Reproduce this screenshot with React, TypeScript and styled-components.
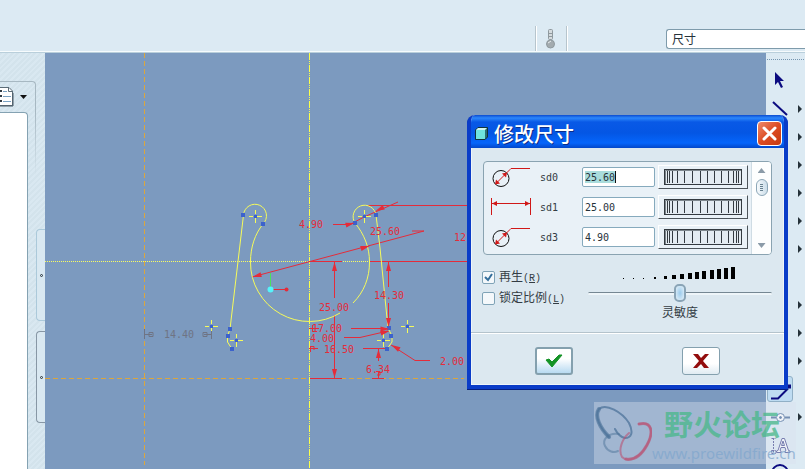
import React from "react";
import styled, { createGlobalStyle, css } from "styled-components";

const GlobalStyle = createGlobalStyle`
  *, *::before, *::after { box-sizing: border-box; }
  body {
    margin: 0;
    overflow: hidden;
    font-family: "DejaVu Sans Mono", "Noto Sans CJK SC", monospace;
    font-size: 12px;
    color: #333c44;
    background: #dceaf3;
  }
`;

const cjk = css`font-family: "Noto Sans CJK SC", sans-serif;`;

const Page = styled.div`
  display: flex;
  flex-direction: column;
  height: 100vh;
`;

const TopBar = styled.header`
  display: flex;
  flex: none;
  align-items: flex-end;
  justify-content: flex-end;
  gap: 99px;
  height: 53px;
  padding-top: 26px;
  background: #dceaf3;
  border-bottom: 1px solid #b9cfdb;
  box-shadow: inset 0 -1px #f6fbfd;
`;

const ToolGroup = styled.div`
  display: flex;
  align-items: center;
  justify-content: center;
  width: 32px;
  height: 25px;
  margin-bottom: 1px;
  border: solid #b7c5cd;
  border-width: 0 1px;
  box-shadow: inset 1px 0 #fff, 1px 0 #fff;
`;

const FilterSelect = styled.select`
  ${cjk}
  appearance: none;
  width: 139px;
  height: 20px;
  margin-bottom: 3px;
  padding: 0 5px;
  font-size: 12px;
  line-height: 16px;
  color: #26323a;
  background: #fff;
  border: 1px solid #7e9bab;
  border-right: 0;
  border-radius: 3px 0 0 3px;
`;

const Workspace = styled.div`
  display: flex;
  flex: 1;
  min-height: 0;
`;

const SidePanel = styled.aside`
  display: flex;
  flex: none;
  width: 45px;
  background: repeating-linear-gradient(135deg, #d3e3ec 0 2px, #d9e8f1 2px 4px);
`;

const TreePane = styled.section`
  display: flex;
  flex-direction: column;
  flex: 1;
  padding-top: 28px;
  background: linear-gradient(#a7b8c2, rgba(167, 184, 194, 0)) right 59px / 1px 64px no-repeat;
`;

const TreeHeader = styled.div`
  display: flex;
  flex: none;
  align-items: center;
  gap: 6px;
  height: 31px;
  border-top: 1px solid #a7b8c2;
  border-right: 1px solid #a7b8c2;
  border-top-right-radius: 4px;
`;

const TreeBody = styled.div`
  flex: 1;
  margin-right: 8px;
  background: #fff;
  border: solid #84a2b2;
  border-width: 1px 1px 0 0;
  border-top-right-radius: 4px;
`;

const PlainButton = styled.button`
  display: flex;
  align-items: center;
  padding: 0;
  background: none;
  border: 0;
`;

const SplitterColumn = styled.div`
  display: flex;
  flex-direction: column;
  gap: 10px;
  width: 9px;
  padding-top: 176px;
`;

const SplitterTab = styled.button<{ $strong?: boolean }>`
  display: flex;
  align-items: center;
  justify-content: center;
  height: 92px;
  padding: 0;
  background: #d9e8f1;
  border: 1px solid ${(p) => (p.$strong ? "#8797a5" : "#abc9da")};
  border-right: 0;
  border-radius: 4px 0 0 4px;

  &::before {
    width: 3px;
    height: 3px;
    content: "";
    border: 1px solid #26323a;
    border-radius: 50%;
  }
`;

const Canvas = styled.main`
  flex: 1;
  min-width: 0;
  background: #7c9abf;
`;

const Drawing = styled.svg`
  display: block;
  width: 100%;
  height: 100%;
  font-family: "DejaVu Sans Mono", monospace;
  font-size: 10px;
`;

const Toolbar = styled.nav`
  display: flex;
  flex-direction: column;
  flex: none;
  width: 39px;
  padding: 4px 0 0 1px;
  overflow: hidden;
  background: #dceaf3;
`;

const Grip = styled.div`
  flex: none;
  height: 3px;
  margin-bottom: 7px;
  background:
    repeating-linear-gradient(#dceaf3 0 1px, transparent 1px 2px) 0 1px,
    repeating-linear-gradient(90deg, #7595b0 0 1px, #dceaf3 1px 2px);
`;

const ToolRow = styled.div`
  display: flex;
  flex: none;
  align-items: center;
  justify-content: space-between;
  height: 28px;
  padding-right: 3px;
`;

const ToolButton = styled.button<{ $active?: boolean }>`
  display: flex;
  align-items: center;
  justify-content: center;
  width: 26px;
  height: 26px;
  padding: 0;
  background: ${(p) => (p.$active ? "#bedcf2" : "none")};
  border: 1px solid ${(p) => (p.$active ? "#91b0c6" : "transparent")};
  border-radius: 3px;
`;

const Flyout = styled.button`
  width: 4px;
  height: 8px;
  padding: 0;
  background: none;
  border: solid transparent;
  border-width: 4px 0 4px 4px;
  border-left-color: #26323a;
`;

const Dialog = styled.section`
  position: absolute;
  top: 115px;
  left: 467px;
  width: 321px;
  overflow: hidden;
  background: #dce8f0;
  border: solid #0a3cc8;
  border-width: 0 4px 4px;
  border-radius: 8px 8px 0 0;
  box-shadow: inset 0 0 0 1px #eef5f9, 0 1px #061f80;
`;

const TitleBar = styled.header`
  display: flex;
  align-items: center;
  gap: 6px;
  height: 33px;
  margin: 0 -4px;
  padding: 4px 6px 0 8px;
  background: linear-gradient(#0a4bd0 0, #2c87fb 3px, #0959e6 7px, #0456e4 18px, #0565fb 28px, #0347c9 33px);
`;

const Title = styled.h1`
  ${cjk}
  flex: 1;
  margin: 0;
  font-size: 20px;
  font-weight: 500;
  line-height: 28px;
  color: #fff;
  text-shadow: 1px 1px #0a2e8c;
`;

const CloseButton = styled.button`
  display: flex;
  align-items: center;
  justify-content: center;
  width: 25px;
  height: 25px;
  padding: 0;
  background: linear-gradient(135deg, #ee8b6c, #dc4c23 50%, #c53a12);
  border: 1px solid #fff;
  border-radius: 4px;
`;

const ListBox = styled.div`
  display: flex;
  height: 94px;
  margin: 13px 12px 0;
  overflow: hidden;
  background: #e9f1f7;
  border: 1px solid #8aa3b1;
  border-radius: 4px;
`;

const DimensionRows = styled.div`
  flex: 1;
`;

const DimensionRow = styled.div`
  display: flex;
  align-items: center;
  height: 30px;
  padding-left: 7px;
`;

const DimensionLabel = styled.label`
  width: 42px;
  margin-left: 8px;
  font-size: 10px;
`;

const DimensionInput = styled.input<{ $selected?: boolean }>`
  width: 73px;
  height: 20px;
  margin-right: 3px;
  padding: 0 2px;
  font-family: "DejaVu Sans Mono", monospace;
  font-size: 10px;
  color: #26323a;
  background: #fff;
  border: 1px solid #86aabd;
  border-radius: 2px;
  ${(p) =>
    p.$selected &&
    css`
      background-image: linear-gradient(90deg, #a9dcdc 30px, #111 30px, #111 31px, transparent 31px);
      background-repeat: no-repeat;
      background-position: 2px 3px;
      background-size: 31px 12px;
    `}
`;

const WheelButton = styled.button`
  display: flex;
  align-items: center;
  justify-content: center;
  width: 90px;
  height: 24px;
  padding: 0;
  background: #e9f1f7;
  border: solid;
  border-width: 1px 1px 1px 1px;
  border-color: #fff #4c545a #4c545a #fff;
`;

const ScrollBar = styled.div`
  display: flex;
  flex-direction: column;
  align-items: center;
  width: 20px;
  padding: 6px 0;
  background: #fdfefe;
  border-left: 1px solid #cfdce4;
`;

const ScrollArrow = styled.button<{ $down?: boolean }>`
  width: 8px;
  height: 5px;
  padding: 0;
  background: #8b9ba8;
  border: 0;
  clip-path: ${(p) => (p.$down ? "polygon(0 0, 100% 0, 50% 100%)" : "polygon(50% 0, 100% 100%, 0 100%)")};
`;

const ScrollThumb = styled.div`
  display: flex;
  align-items: center;
  justify-content: center;
  width: 12px;
  height: 17px;
  margin: 6px 0 auto;
  background: linear-gradient(90deg, #f6fafc, #cbdde9);
  border: 1px solid #8ba6b7;
  border-radius: 6px;

  &::before {
    width: 3px;
    height: 7px;
    content: "";
    background: repeating-linear-gradient(#66808f 0 1px, transparent 1px 2px);
  }
`;

const Options = styled.div`
  display: flex;
  justify-content: space-between;
  height: 78px;
  padding: 12px 12px 0 11px;
  border-bottom: 1px solid #b4c3cc;
  box-shadow: 0 1px #fff;
`;

const CheckColumn = styled.div`
  display: flex;
  flex-direction: column;
  gap: 1px;
`;

const CheckLabel = styled.label`
  display: flex;
  align-items: center;
  gap: 4px;
  height: 20px;
  white-space: nowrap;
`;

const CheckText = styled.span`
  ${cjk}
  font-size: 12px;
  line-height: 20px;
`;

const Mnemonic = styled.span`
  font-family: "Liberation Mono", monospace;
  font-size: 10px;
`;

const CheckBox = styled.input`
  appearance: none;
  width: 13px;
  height: 13px;
  margin: 0;
  background: #f4f8fb;
  border: 1px solid #7fa3b7;
  border-radius: 2px;

  &:checked {
    background: #f4f8fb
      url("data:image/svg+xml,%3Csvg xmlns='http://www.w3.org/2000/svg' viewBox='0 0 11 11'%3E%3Cpath d='M2 5l3 3 4-6' fill='none' stroke='%23356f9c' stroke-width='2'/%3E%3C/svg%3E");
  }
`;

const SensitivityColumn = styled.div`
  display: flex;
  flex-direction: column;
  align-items: center;
  width: 184px;
`;

const Ramp = styled.svg`
  display: block;
  width: 114px;
  height: 12px;
`;

const Slider = styled.input`
  appearance: none;
  width: 100%;
  height: 18px;
  margin: 5px 0 0;
  background: none;

  &::-webkit-slider-runnable-track {
    height: 3px;
    background: #eef5f9;
    border-top: 1px solid #758793;
    border-radius: 2px;
  }

  &::-webkit-slider-thumb {
    appearance: none;
    width: 12px;
    height: 18px;
    margin-top: -9px;
    background: radial-gradient(#9bcbec, #e6f2fa);
    border: 2px solid #8aa4b6;
    border-radius: 5px;
  }
`;

const SliderLabel = styled.label`
  ${cjk}
  font-size: 12px;
  line-height: 20px;
`;

const Actions = styled.footer`
  display: flex;
  justify-content: space-between;
  padding: 14px 64px 10px;
`;

const ActionButton = styled.button<{ $primary?: boolean }>`
  display: flex;
  align-items: center;
  justify-content: center;
  width: 38px;
  height: 28px;
  padding: 0;
  background: ${(p) => (p.$primary ? "linear-gradient(#fff 40%, #b8daf1)" : "linear-gradient(#fff 60%, #e0ebf2)")};
  border: ${(p) => (p.$primary ? 2 : 1)}px solid #84a0ae;
  border-radius: 3px;
`;

const Watermark = styled.div`
  position: absolute;
  right: 9px;
  bottom: 5px;
  display: flex;
  align-items: center;
  width: 202px;
  height: 62px;
  background: rgba(218, 226, 238, 0.4);
  pointer-events: none;
`;

const WatermarkText = styled.div`
  display: flex;
  flex-direction: column;
  white-space: nowrap;
`;

const WatermarkName = styled.strong`
  ${cjk}
  margin-left: 12px;
  font-size: 29px;
  font-weight: 700;
  line-height: 40px;
  color: rgba(76, 184, 140, 0.8);
`;

const WatermarkUrl = styled.span`
  font-family: "Noto Sans", sans-serif;
  font-size: 15px;
  line-height: 20px;
  color: rgba(128, 166, 205, 0.75);
`;

type Point = [number, number];

const RED = "#e42c3a";
const YELLOW = "#f6fb5a";

const vertices: Point[] = [
  [243, 215], [263, 224], [230, 329], [228, 336], [232, 349],
  [355, 223], [376, 215], [389, 328], [391, 336], [387, 349],
];

const centres: Point[] = [[255, 216], [236, 340], [211, 326], [364, 216], [383, 340], [407, 326]];

const dimensionTexts: { x: number; y: number; text: string }[] = [
  { x: 299, y: 228, text: "4.90" },
  { x: 370, y: 235, text: "25.60" },
  { x: 454, y: 241, text: "12" },
  { x: 374, y: 299, text: "14.30" },
  { x: 319, y: 311, text: "25.00" },
  { x: 312, y: 332, text: "17.00" },
  { x: 310, y: 342, text: "4.00" },
  { x: 324, y: 353, text: "16.50" },
  { x: 440, y: 365, text: "2.00" },
  { x: 366, y: 373, text: "6.34" },
];

const arrows: { at: Point; angle: number }[] = [
  { at: [252, 277], angle: 165 },
  { at: [369, 246], angle: -16 },
  { at: [354, 223], angle: -14 },
  { at: [375, 211], angle: 156 },
  { at: [334, 262], angle: -90 },
  { at: [334, 378], angle: 90 },
  { at: [388, 262], angle: -90 },
  { at: [388, 327], angle: 90 },
  { at: [389, 329], angle: 0 },
  { at: [389, 331], angle: -14 },
  { at: [391, 345], angle: 210 },
  { at: [378, 349], angle: -90 },
];

function Sketch() {
  return (
    <Drawing role="img" aria-label="Sketch">
      <g transform="translate(-45 -53)" fill="none">
        <g stroke="#dca63c" strokeDasharray="5 3">
          <path d="M144.500 53V465" />
          <path d="M45 378.500H464" />
        </g>
        <path d="M45 261.500H370" stroke="#fbff5e" strokeDasharray="1 1" shapeRendering="crispEdges" />
        <path d="M309.500 53V469" stroke="#fbff4a" strokeDasharray="7 1 1 1 1 1" shapeRendering="crispEdges" />
        <g stroke={RED}>
          <path d="M370 261.500H470M368 205.500H470" />
          <path d="M252 277L424 231H412" />
          <path d="M333 224.500H350L364 217L398 202" />
          <path d="M309 261.500H342M310 378.500H342M334.500 262V298M334.500 315V378" />
          <path d="M388.500 262V287M388.500 303V327" />
          <path d="M351 328.500H388M344 337.500H360L388 331M363 348.500H386" />
          <path d="M391 345L415 360.500H430" />
          <path d="M378.500 349V361M372 378.500H384M378.500 371V378M376 371.500H380V375H377" />
          <path d="M309 328.500H319M312.500 325V332M309 348.500H318M310.500 346V352M310 346.500H314V350" />
        </g>
        <g stroke={YELLOW}>
          <path d="M263 224C255 234 250.500 247 250.500 262A59 59 0 0 0 340 313" />
          <path d="M355 223C364 234 369.500 247 369.500 262C369.500 278 364 292 353 303" />
          <path d="M230 329L243.500 215A11.500 11.500 0 1 1 263 224" />
          <path d="M230 329L227.500 336V342L232 349" />
          <path d="M355 223A11.500 11.500 0 1 1 376 215L380 248L388 328" />
          <path d="M388 328L392 336V342L387 349" />
          {centres.map(([x, y]) => (
            <path key={`${x}-${y}`} d={`M${x - 6} ${y + 0.5}h4m4 0h5M${x + 0.5} ${y - 6}v4m0 4v5`} />
          ))}
        </g>
        <g fill="#3c62cc">
          {vertices.map(([x, y]) => (
            <rect key={`${x}-${y}`} x={x - 2} y={y - 2} width="4" height="4" />
          ))}
          {centres.map(([x, y]) => (
            <rect key={`${x}-${y}`} x={x - 1} y={y - 1} width="3" height="3" />
          ))}
        </g>
        <g fill={RED}>
          {arrows.map(({ at, angle }) => (
            <path key={`${at[0]}-${at[1]}`} d="M0 0L-9 -2.500V2.500Z" transform={`translate(${at[0] + 0.5} ${at[1]}) rotate(${angle})`} />
          ))}
          {dimensionTexts.map(({ x, y, text }) => (
            <text key={text} x={x} y={y}>{text}</text>
          ))}
        </g>
        <g stroke="#6f7484">
          <path d="M144.500 329V339M144 334.500H152M149 332.500H153V336.500H149ZM203 332.500H207V336.500H203ZM204 334.500H212M211.500 331V339" />
        </g>
        <text x="164" y="338" fill="#6f7484">14.40</text>
        <path d="M270.500 289V273" stroke="#4be05c" />
        <path d="M270 289.500H286" stroke={RED} />
        <circle cx="270.500" cy="289.500" r="3" fill="#55f4fb" />
        <circle cx="286.500" cy="289.500" r="2" fill={RED} />
      </g>
    </Drawing>
  );
}

function Thermometer() {
  return (
    <svg width="12" height="20" viewBox="0 0 12 20" fill="#d5dbde" stroke="#8f999e">
      <rect x="3.500" y=".5" width="4" height="10" rx="1" />
      <path d="M3 4.500h5M3 7.500h5" />
      <circle cx="5.500" cy="15" r="4" fill="#a3abaf" />
      <path d="M3 14l3-2" stroke="#e9edef" />
    </svg>
  );
}

function DocumentIcon() {
  return (
    <svg width="14" height="20" viewBox="0 0 14 20" fill="none">
      <path d="M-4 .5H9L12.500 4V18.500H-4Z" fill="#fff" stroke="#5c6d78" />
      <path d="M8.500 .5V4.500H12.500" stroke="#5c6d78" />
      <path d="M3 4.500H7M3 9.500H11M3 14.500H11" stroke="#7ba3c4" />
      <path d="M0 3h2v2H0zM0 8h2v2H0zM0 13h2v2H0z" fill="#333c44" />
      <path d="M0 19H13V6" stroke="#4b5b66" />
    </svg>
  );
}

const tools: { name: string; active?: boolean; flyout?: boolean; icon?: React.ReactNode }[] = [
  { name: "Select", icon: <path d="M7 3V16L10 13L13 19L15 18L12 12H16Z" fill="#0b0b80" /> },
  { name: "Line", flyout: true, icon: <path d="M5 5L19 18" stroke="#0b0b80" strokeWidth="2" /> },
  { name: "Rectangle", flyout: true },
  { name: "Circle", flyout: true },
  { name: "Arc", flyout: true },
  { name: "Fillet", flyout: true },
  { name: "Spline", flyout: true },
  { name: "Point" },
  { name: "Edge", flyout: true },
  { name: "Dimension", flyout: true },
  { name: "Modify", flyout: true },
  { name: "Trim", active: true, icon: <path d="M3 21.500H10L20 11.500M20 8.500h2v2h-2z" stroke="#0b0b80" strokeWidth="2" /> },
  {
    name: "Constrain",
    flyout: true,
    icon: (
      <g stroke="#32598c">
        <path d="M3 12.500H8M17 12.500H22" strokeWidth="2" />
        <circle cx="12.500" cy="12.500" r="4" fill="#fff" />
        <circle cx="12.500" cy="12.500" r="1" fill="#32598c" />
      </g>
    ),
  },
  {
    name: "Text",
    icon: (
      <g stroke="#363b86">
        <path d="M5.500 5V20M3.500 5.500h4M3.500 17.500h4v3h-4z" strokeDasharray="2 1" />
        <path d="M8.500 19.500V18L10 17.500L14 5.500H16.500L20.500 17.500L22 18V19.500H17V18L18 17.500L17 14.500H13L12 17.500L13 18V19.500ZM13.500 12.500H16.500L15 8Z" fill="#fff" />
      </g>
    ),
  },
  { name: "Palette", icon: <circle cx="12" cy="12" r="8" stroke="#0b0b80" strokeWidth="2" /> },
];

function DiameterIcon() {
  return (
    <svg width="41" height="24" viewBox="0 0 41 24" fill="none">
      <circle cx="10" cy="13.500" r="8" stroke="#111" />
      <path d="M5 18.500L19 4.500L20 3.500H39" stroke="#d01818" />
      <path d="M4 19.500L5 14.500L9 18.500ZM16 7.500L11 8.500L15 12.500Z" fill="#d01818" />
    </svg>
  );
}

function LengthIcon() {
  return (
    <svg width="41" height="24" viewBox="0 0 41 24" fill="none" stroke="#d01818">
      <path d="M.5 3V20M39.500 3V20M1 8.500H39" />
      <path d="M1 8.500L6 6V11ZM39 8.500L34 6V11Z" fill="#d01818" stroke="none" />
    </svg>
  );
}

const wheelTicks = [3, 5, 8, 13, 20, 28, 36, 43, 50, 57, 64, 69, 72, 74];

function WheelIcon() {
  return (
    <svg width="78" height="16" viewBox="0 0 78 16" fill="none" stroke="#333a40">
      <rect x=".5" y=".5" width="77" height="15" fill="#e3ebf1" />
      <path d="M1.500 15V1.500H77" stroke="#7d868c" />
      {wheelTicks.map((x) => (
        <path key={x} d={`M${x + 0.5} 2V14`} />
      ))}
    </svg>
  );
}

const rampBars = [
  [0, 1], [10, 1], [20, 1], [31, 2], [41, 3], [49, 4], [57, 5],
  [65, 6], [72, 7], [79, 8], [87, 9], [94, 10], [101, 11], [108, 12],
];

const dimensions = [
  { id: "sd0", value: "25.60", icon: <DiameterIcon />, selected: true },
  { id: "sd1", value: "25.00", icon: <LengthIcon /> },
  { id: "sd3", value: "4.90", icon: <DiameterIcon /> },
];

function ModifyDialog() {
  return (
    <Dialog role="dialog" aria-labelledby="dialog-title">
      <TitleBar>
        <svg width="13" height="13" viewBox="0 0 13 13">
          <path d="M.5 3L3 .5H12.500V10L10 12.500H.5Z" fill="#2a6f74" stroke="#12323b" />
          <path d="M1 3H10V12H1Z" fill="#6fe3de" />
          <path d="M1 3L3 1H12L10 3Z" fill="#d3f6f0" />
        </svg>
        <Title id="dialog-title">修改尺寸</Title>
        <CloseButton aria-label="关闭">
          <svg width="17" height="17" viewBox="0 0 17 17">
            <path d="M3 3L14 14M14 3L3 14" stroke="#fff" strokeWidth="3" strokeLinecap="round" />
          </svg>
        </CloseButton>
      </TitleBar>
      <ListBox>
        <DimensionRows>
          {dimensions.map((d) => (
            <DimensionRow key={d.id}>
              {d.icon}
              <DimensionLabel htmlFor={d.id}>{d.id}</DimensionLabel>
              <DimensionInput id={d.id} defaultValue={d.value} $selected={d.selected} />
              <WheelButton aria-label={d.id}>
                <WheelIcon />
              </WheelButton>
            </DimensionRow>
          ))}
        </DimensionRows>
        <ScrollBar>
          <ScrollArrow aria-label="Up" />
          <ScrollThumb />
          <ScrollArrow $down aria-label="Down" />
        </ScrollBar>
      </ListBox>
      <Options>
        <CheckColumn>
          <CheckLabel>
            <CheckBox type="checkbox" defaultChecked />
            <CheckText>再生<Mnemonic>(<u>R</u>)</Mnemonic></CheckText>
          </CheckLabel>
          <CheckLabel>
            <CheckBox type="checkbox" />
            <CheckText>锁定比例<Mnemonic>(<u>L</u>)</Mnemonic></CheckText>
          </CheckLabel>
        </CheckColumn>
        <SensitivityColumn>
          <Ramp viewBox="0 0 114 12" aria-hidden>
            {rampBars.map(([x, h]) => (
              <rect key={x} x={x} y={12 - h} width={Math.min(4, h)} height={h} fill="#000" />
            ))}
          </Ramp>
          <Slider id="sensitivity" type="range" defaultValue={50} />
          <SliderLabel htmlFor="sensitivity">灵敏度</SliderLabel>
        </SensitivityColumn>
      </Options>
      <Actions>
        <ActionButton $primary aria-label="确定">
          <svg width="18" height="14" viewBox="0 0 18 14">
            <path d="M1 6L4 5L7 8L14 1H17L7 13Z" fill="#149326" stroke="#149326" />
          </svg>
        </ActionButton>
        <ActionButton aria-label="取消">
          <svg width="16" height="14" viewBox="0 0 16 14">
            <path d="M0 0H5L8 4L12 0H16L10 7L16 14H11L8 10L4 14H0L6 7Z" fill="#930d0d" />
          </svg>
        </ActionButton>
      </Actions>
    </Dialog>
  );
}

function ForumMark() {
  return (
    <Watermark>
      <svg width="58" height="58" viewBox="0 0 58 58" fill="none" strokeLinecap="round">
        <path d="M15 33C6 24 0 12 5 5C12-1 28 8 35 19C40 29 37 34 31 34C26 33 23 29 21 25" stroke="#4d7399" strokeOpacity=".75" strokeWidth="2" />
        <path d="M15 33C6 24 0 12 5 5" stroke="#4d7399" strokeOpacity=".65" strokeWidth="4" />
        <path d="M25 30C14 28 8 36 11 42C14 48 20 49 24 47" stroke="#4d7399" strokeOpacity=".5" strokeWidth="2" />
        <path d="M45 20C58 17 60 28 53 41C46 54 34 59 28 53C24 46 28 35 35 29" stroke="#b95475" strokeOpacity=".6" strokeWidth="2" />
        <path d="M45 20C58 17 60 28 53 41C46 54 38 56 32 55" stroke="#b95475" strokeOpacity=".65" strokeWidth="3" />
      </svg>
      <WatermarkText>
        <WatermarkName>野火论坛</WatermarkName>
        <WatermarkUrl>www.proewildfire.cn</WatermarkUrl>
      </WatermarkText>
    </Watermark>
  );
}

export default function App() {
  return (
    <Page>
      <GlobalStyle />
      <TopBar>
        <ToolGroup>
          <PlainButton aria-label="Regenerate">
            <Thermometer />
          </PlainButton>
        </ToolGroup>
        <FilterSelect aria-label="Filter">
          <option>尺寸</option>
        </FilterSelect>
      </TopBar>
      <Workspace>
        <SidePanel>
          <TreePane>
            <TreeHeader>
              <PlainButton aria-label="Tree settings">
                <DocumentIcon />
              </PlainButton>
              <PlainButton aria-label="Tree menu">
                <svg width="7" height="4" viewBox="0 0 7 4">
                  <path d="M0 0H7L3.500 4Z" fill="#111" />
                </svg>
              </PlainButton>
            </TreeHeader>
            <TreeBody />
          </TreePane>
          <SplitterColumn>
            <SplitterTab aria-label="Toggle tree" />
            <SplitterTab $strong aria-label="Toggle browser" />
          </SplitterColumn>
        </SidePanel>
        <Canvas>
          <Sketch />
        </Canvas>
        <Toolbar>
          <Grip />
          {tools.map((t) => (
            <ToolRow key={t.name}>
              <ToolButton $active={t.active} aria-label={t.name}>
                {t.icon && (
                  <svg width="24" height="24" viewBox="0 0 24 24" fill="none">{t.icon}</svg>
                )}
              </ToolButton>
              {t.flyout && <Flyout aria-label={`${t.name} options`} />}
            </ToolRow>
          ))}
        </Toolbar>
      </Workspace>
      <ModifyDialog />
      <ForumMark />
    </Page>
  );
}
